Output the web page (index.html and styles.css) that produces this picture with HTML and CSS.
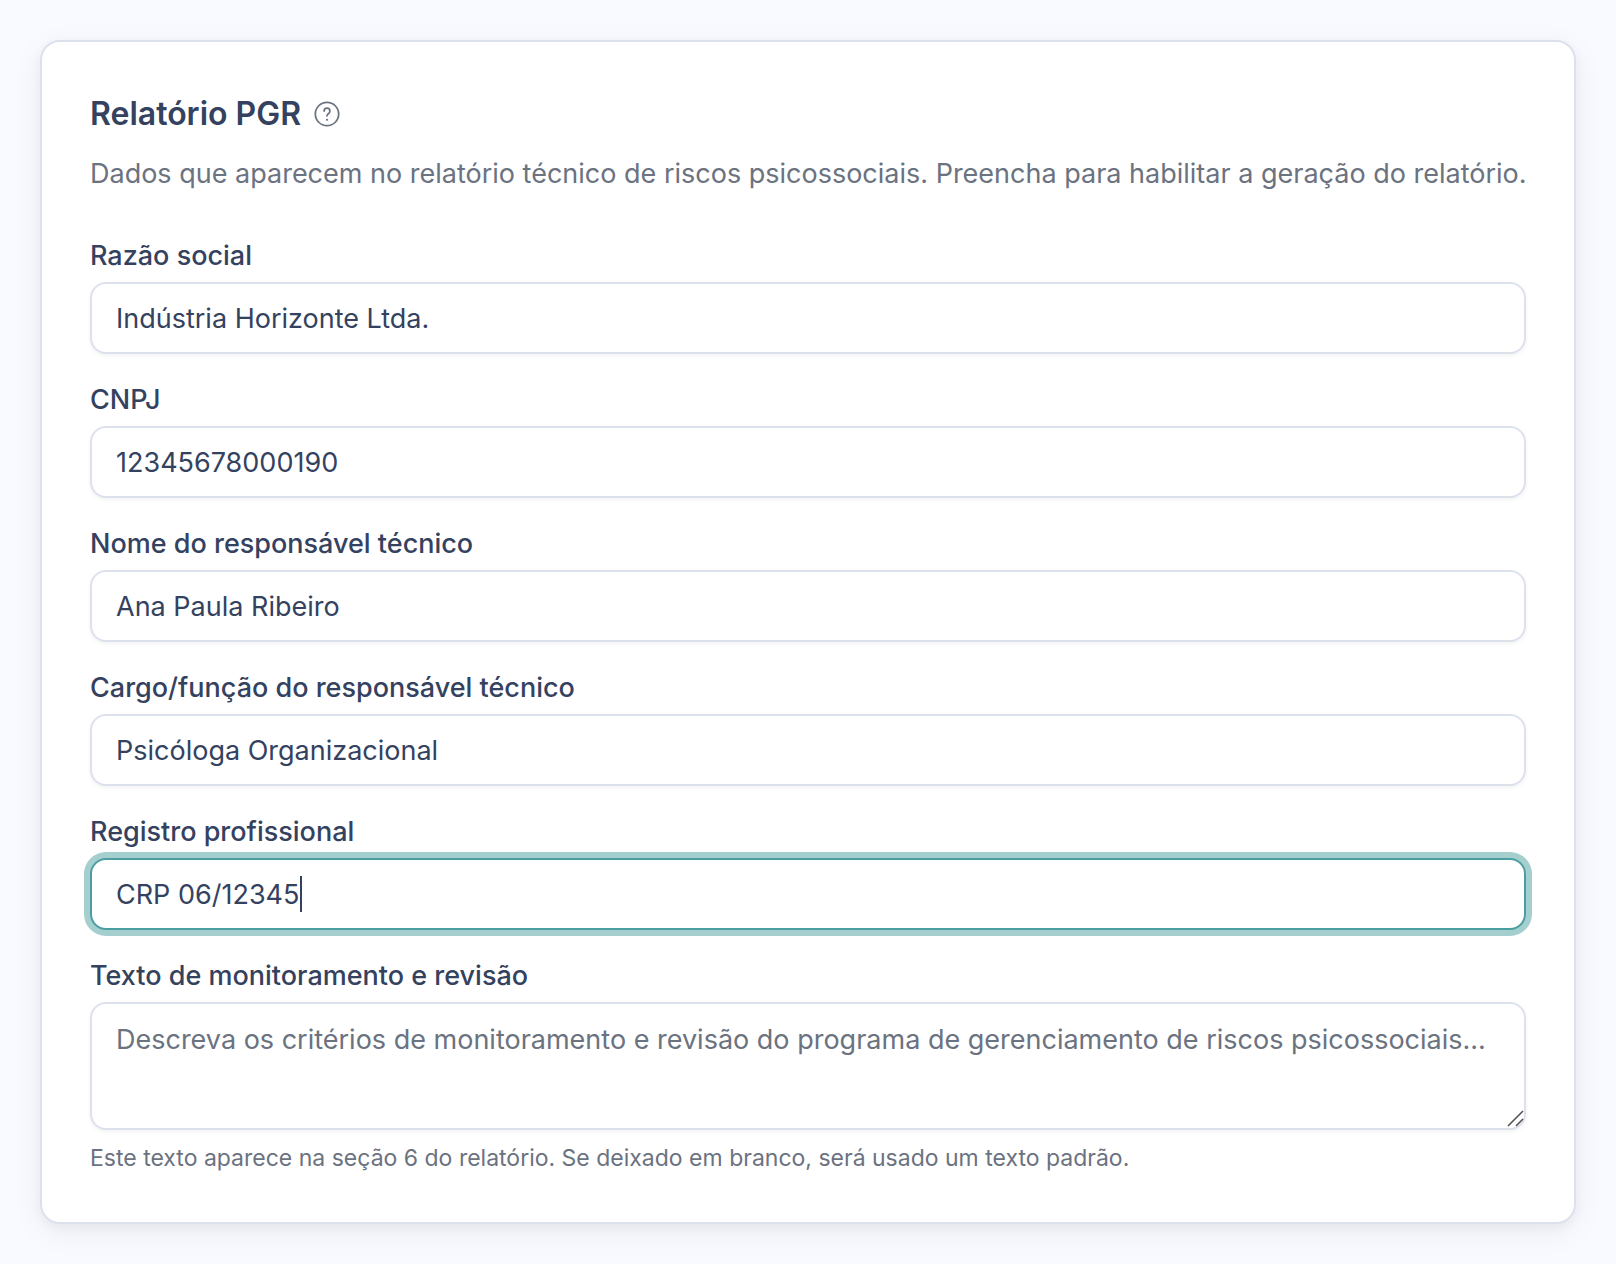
FILE: index.html
```html
<!DOCTYPE html>
<html lang="pt-BR">
<head>
   <meta charset="UTF-8">
   <meta name="viewport" content="width=device-width, initial-scale=1">
   <title>Relatório PGR</title>
   <link rel="stylesheet" href="styles.css">
</head>
<body>
   <form class="card" action="#" method="post">
      <div class="card-header">
         <div class="title-row">
            <h1>Relatório PGR</h1>
            <button type="button" class="help" aria-label="Ajuda">
               <svg viewBox="0 0 24 24" fill="none" stroke="currentColor" stroke-width="1.5" stroke-linecap="round">
                  <circle cx="12" cy="12" r="10"/>
                  <path d="M9.5 9.5C9.5 8.12 10.62 7 12 7C13.38 7 14.5 8.12 14.5 9.5C14.5 10.36 14.07 11.11 13.41 11.56C12.73 12.03 12 12.67 12 13.5"/>
                  <path d="M12 16.9V17" stroke-width="1.8"/>
               </svg>
            </button>
         </div>
         <p class="description">Dados que aparecem no relatório técnico de riscos psicossociais. Preencha para habilitar a geração do relatório.</p>
      </div>

      <div class="fields">
         <div class="field">
            <label for="razao">Razão social</label>
            <input type="text" id="razao" name="razao" value="Indústria Horizonte Ltda.">
         </div>
         <div class="field">
            <label for="cnpj">CNPJ</label>
            <input type="text" id="cnpj" name="cnpj" value="12345678000190">
         </div>
         <div class="field">
            <label for="nome">Nome do responsável técnico</label>
            <input type="text" id="nome" name="nome" value="Ana Paula Ribeiro">
         </div>
         <div class="field">
            <label for="cargo">Cargo/função do responsável técnico</label>
            <input type="text" id="cargo" name="cargo" value="Psicóloga Organizacional">
         </div>
         <div class="field">
            <label for="registro">Registro profissional</label>
            <div class="control">
               <input type="text" id="registro" name="registro" class="active" value="CRP 06/12345">
               <span class="caret"></span>
            </div>
         </div>
         <div class="field">
            <label for="monitoramento">Texto de monitoramento e revisão</label>
            <div class="control">
               <textarea id="monitoramento" name="monitoramento" aria-describedby="monitoramento-hint" placeholder="Descreva os critérios de monitoramento e revisão do programa de gerenciamento de riscos psicossociais..."></textarea>
               <svg class="grip" viewBox="0 0 18 18" fill="none" stroke="#555" stroke-width="1.6">
                  <path d="M2 16L17 1M10 16L17 9"/>
               </svg>
            </div>
            <p class="hint" id="monitoramento-hint">Este texto aparece na seção 6 do relatório. Se deixado em branco, será usado um texto padrão.</p>
         </div>
      </div>
   </form>
</body>
</html>
```

FILE: styles.css
```css
* {
   box-sizing: border-box;
}

body {
   margin: 0;
   padding: 40px;
   background-color: #f9faff;
   color: #344260;
   font-family: Inter, "Liberation Sans", sans-serif;
   font-size: 27px;
}

.card {
   background-color: #fff;
   border: 2px solid #dde1eb;
   border-radius: 20px;
   padding: 48px;
   box-shadow: 0 8px 32px rgba(0, 0, 0, 0.06), 0 4px 12px rgba(0, 0, 0, 0.04);
}

.card-header {
   margin-bottom: 48px;
}

.title-row {
   display: flex;
   align-items: center;
   gap: 12px;
   margin-bottom: 16px;
}

h1 {
   margin: 0;
   font-size: 32px;
   line-height: 48px;
   font-weight: 600;
}

.help {
   display: flex;
   padding: 0;
   border: none;
   background: none;
   color: #6b7280;
   cursor: pointer;
}

.help svg {
   width: 28px;
   height: 28px;
}

.description {
   margin: 0 -16px 0 0;
   line-height: 40px;
   color: #6b7280;
}

.fields {
   display: flex;
   flex-direction: column;
   gap: 32px;
}

.field {
   display: flex;
   flex-direction: column;
   gap: 12px;
}

label {
   line-height: 28px;
   font-weight: 500;
}

.control {
   position: relative;
   display: flex;
}

input,
textarea {
   width: 100%;
   padding: 8px 24px;
   border: 2px solid #dde1eb;
   border-radius: 16px;
   background-color: #fff;
   box-shadow: 0 2px 4px rgba(0, 0, 0, 0.05);
   color: inherit;
   font: inherit;
   line-height: 40px;
   outline: none;
}

input {
   height: 72px;
}

textarea {
   height: 128px;
   padding: 16px 24px;
   resize: vertical;
}

textarea::placeholder {
   color: #6b7280;
}

textarea::-webkit-resizer {
   display: none;
}

input:focus,
textarea:focus,
input.active {
   border-color: #4a9ea0;
   box-shadow: 0 0 0 6px #a5cfcf;
}

.caret {
   position: absolute;
   left: 210px;
   top: 18px;
   width: 2px;
   height: 36px;
   background-color: #344260;
}

.grip {
   position: absolute;
   right: 2px;
   bottom: 2px;
   width: 18px;
   height: 18px;
   pointer-events: none;
}

.hint {
   margin: 0;
   font-size: 23px;
   line-height: 32px;
   color: #6b7280;
}
```
